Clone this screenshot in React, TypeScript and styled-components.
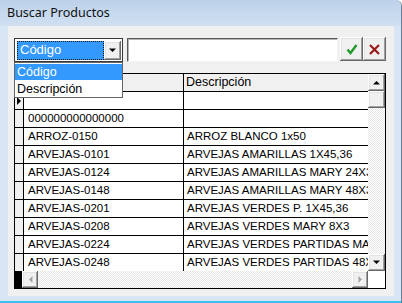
import React from 'react';
import styled, { createGlobalStyle, css } from 'styled-components';

const Global = createGlobalStyle`
  html, body { margin: 0; padding: 0; width: 402px; height: 303px; overflow: hidden; background: #ffffff; }
  * { box-sizing: border-box; }
`;

const raised = css`
  background: #f0f0f0;
  box-shadow: inset -1px -1px 0 #696969, inset 1px 1px 0 #ffffff, inset -2px -2px 0 #a0a0a0, inset 2px 2px 0 #e3e3e3;
`;

const Window = styled.div`
  width: 402px;
  height: 303px;
  display: flex;
  flex-direction: column;
  background: #d8e5f4;
  font-family: "Liberation Sans", Arial, sans-serif;
  border-top-right-radius: 6px;
  border-right: 1px solid #6d7f96;
  overflow: hidden;
`;

const TitleBar = styled.div`
  height: 26px;
  flex: none;
  display: flex;
  align-items: center;
  padding-left: 7px;
  padding-bottom: 1px;
  background: linear-gradient(#bcd1ea, #d0e0f1);
  font-family: "Noto Sans", sans-serif;
  font-size: 12.5px;
  color: #111;
`;

const Body = styled.div`
  flex: 1;
  display: flex;
  padding: 0 7px 0 8px;
  background: #d8e5f4;
`;

const Content = styled.div`
  position: relative;
  width: 386px;
  height: 270px;
  background: #f0f0f0;
  padding: 11px 8px 0 6px;
  display: flex;
  flex-direction: column;
`;

const BottomFrame = styled.div`
  height: 7px;
  flex: none;
  background: #d8e5f4;
  border-bottom: 2px solid #3cc3ea;
`;

const Toolbar = styled.div`
  display: flex;
  align-items: flex-start;
  height: 25px;
`;

const Combo = styled.div`
  margin-top: 1px;
  width: 109px;
  height: 24px;
  border: 1px solid #3a3a3a;
  background: #fff;
  padding: 2px 1px 1px 2px;
  display: flex;
`;

const ComboValue = styled.div`
  flex: 1;
  background: #3399ff;
  border: 1px dotted #1a1a1a;
  color: #fff;
  font-size: 13px;
  line-height: 16px;
  padding-left: 2px;
`;

const DropButton = styled.div`
  ${raised};
  width: 17px;
  display: flex;
  align-items: center;
  justify-content: center;
`;

const TextInput = styled.div`
  margin-top: 1px;
  margin-left: 4px;
  width: 211px;
  height: 24px;
  background: #fff;
  border-style: solid;
  border-width: 1px;
  border-color: #5a5a5a #f4f4f4 #f4f4f4 #5a5a5a;
  box-shadow: inset 1px 1px 0 #b4b4b4;
`;

const ToolButton = styled.div<{ $first?: boolean }>`
  ${raised};
  width: 23px;
  height: 24px;
  margin-left: ${p => (p.$first ? '2px' : '0')};
  display: flex;
  align-items: center;
  justify-content: center;
`;

const Grid = styled.div`
  margin-top: 11px;
  width: 372px;
  height: 216px;
  border: 1px solid #000;
  display: flex;
  flex-direction: column;
  background: #f0f0f0;
`;

const GridMain = styled.div`
  display: flex;
  height: 197px;
`;

const DataArea = styled.div`
  flex: 1;
  overflow: hidden;
`;

const Row = styled.div<{ $header?: boolean }>`
  display: flex;
  height: 18px;
  border-bottom: 1px solid #000;
  background: ${p => (p.$header ? '#f0f0f0' : '#ffffff')};
  font-size: ${p => (p.$header ? '12.5px' : '11.5px')};
  color: #000;
  line-height: 17px;
  white-space: nowrap;
`;

const Indicator = styled.div`
  width: 9px;
  flex: none;
  border-right: 1px solid #000;
  background: #f0f0f0;
  display: flex;
  align-items: center;
  padding-left: 2px;
`;

const CodeCell = styled.div`
  width: 160px;
  flex: none;
  border-right: 1px solid #000;
  padding-left: 4px;
  overflow: hidden;
`;

const DescCell = styled.div<{ $header?: boolean }>`
  flex: 1;
  padding-left: ${p => (p.$header ? '2px' : '3px')};
  overflow: hidden;
`;

const VScroll = styled.div`
  width: 17px;
  flex: none;
  display: flex;
  flex-direction: column;
`;

const ScrollBtn = styled.div<{ $w?: number }>`
  ${raised};
  width: ${p => (p.$w ? `${p.$w}px` : '17px')};
  height: 17px;
  flex: none;
  display: flex;
  align-items: center;
  justify-content: center;
`;

const Track = styled.div`
  flex: 1;
  background: repeating-conic-gradient(#ffffff 0 25%, #e6e6e6 0 50%) 0 0 / 2px 2px;
`;

const HScroll = styled.div`
  display: flex;
  height: 17px;
`;

const BlackBlock = styled.div`
  width: 7px;
  background: #000;
`;

const Corner = styled.div`
  width: 17px;
  background: #fff;
`;

const DropList = styled.div`
  position: absolute;
  left: 6px;
  top: 36px;
  width: 109px;
  height: 36px;
  background: #fff;
  border: 1px solid #646464;
  padding-top: 1px;
  font-size: 12.5px;
`;

const DropItem = styled.div<{ $selected?: boolean }>`
  height: 16px;
  line-height: 16px;
  padding-left: 2px;
  margin-bottom: 1px;
  background: ${p => (p.$selected ? '#3399ff' : 'transparent')};
  color: ${p => (p.$selected ? '#fff' : '#000')};
`;

const rows: [string, string][] = [
  ['000000000000000', ''],
  ['ARROZ-0150', 'ARROZ BLANCO 1x50'],
  ['ARVEJAS-0101', 'ARVEJAS AMARILLAS 1X45,36'],
  ['ARVEJAS-0124', 'ARVEJAS AMARILLAS MARY 24X3'],
  ['ARVEJAS-0148', 'ARVEJAS AMARILLAS MARY 48X3'],
  ['ARVEJAS-0201', 'ARVEJAS VERDES P. 1X45,36'],
  ['ARVEJAS-0208', 'ARVEJAS VERDES MARY 8X3'],
  ['ARVEJAS-0224', 'ARVEJAS VERDES PARTIDAS MARY 24X3'],
  ['ARVEJAS-0248', 'ARVEJAS VERDES PARTIDAS 48X3'],
];

const Arrow = ({ dir, disabled }: { dir: 'up' | 'down' | 'left' | 'right'; disabled?: boolean }) => {
  const pts = {
    up: '0,4 7,4 3.5,0.5',
    down: '0,0 7,0 3.5,3.5',
    left: '4,0 4,7 0.5,3.5',
    right: '0,0 0,7 3.5,3.5',
  }[dir];
  const vertical = dir === 'up' || dir === 'down';
  return (
    <svg width={vertical ? 7 : 5} height={vertical ? 5 : 7} viewBox={vertical ? '0 0 7 4' : '0 0 4 7'}>
      {disabled && <polygon points={pts} fill="#ffffff" transform="translate(1,1)" />}
      <polygon points={pts} fill={disabled ? '#a0a0a0' : '#000'} />
    </svg>
  );
};

export default function App() {
  return (
    <Window>
      <Global />
      <TitleBar>Buscar Productos</TitleBar>
      <Body>
        <Content>
          <Toolbar>
            <Combo>
              <ComboValue>Código</ComboValue>
              <DropButton>
                <Arrow dir="down" />
              </DropButton>
            </Combo>
            <TextInput />
            <ToolButton $first>
              <svg width="12" height="11" viewBox="0 0 12 11">
                <polyline points="1.5,5.5 4.5,9 10.5,1" fill="none" stroke="#1f9a2b" strokeWidth="2.4" />
              </svg>
            </ToolButton>
            <ToolButton>
              <svg width="11" height="11" viewBox="0 0 11 11">
                <path d="M1,1 L10,10 M10,1 L1,10" stroke="#9a1a1a" strokeWidth="2.2" />
              </svg>
            </ToolButton>
          </Toolbar>
          <Grid>
            <GridMain>
              <DataArea>
                <Row $header>
                  <Indicator />
                  <CodeCell />
                  <DescCell $header>Descripción</DescCell>
                </Row>
                <Row>
                  <Indicator>
                    <svg width="4" height="8" viewBox="0 0 4 8">
                      <polygon points="0,0 4,4 0,8" fill="#000" />
                    </svg>
                  </Indicator>
                  <CodeCell />
                  <DescCell />
                </Row>
                {rows.map(([c, d]) => (
                  <Row key={c}>
                    <Indicator />
                    <CodeCell>{c}</CodeCell>
                    <DescCell>{d}</DescCell>
                  </Row>
                ))}
              </DataArea>
              <VScroll>
                <ScrollBtn>
                  <Arrow dir="up" />
                </ScrollBtn>
                <ScrollBtn />
                <Track />
                <ScrollBtn>
                  <Arrow dir="down" />
                </ScrollBtn>
              </VScroll>
            </GridMain>
            <HScroll>
              <BlackBlock />
              <ScrollBtn $w={16}>
                <Arrow dir="left" disabled />
              </ScrollBtn>
              <Track />
              <ScrollBtn $w={16}>
                <Arrow dir="right" disabled />
              </ScrollBtn>
              <Corner />
            </HScroll>
          </Grid>
          <DropList>
            <DropItem $selected>Código</DropItem>
            <DropItem>Descripción</DropItem>
          </DropList>
        </Content>
      </Body>
      <BottomFrame />
    </Window>
  );
}
